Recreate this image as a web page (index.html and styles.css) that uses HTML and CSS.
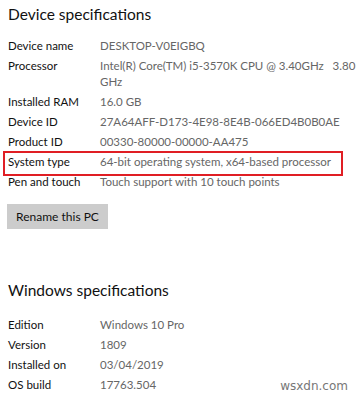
FILE: index.html
```html
<!DOCTYPE html>
<html lang="en">
<head>
    <meta charset="UTF-8">
    <meta name="viewport" content="width=device-width, initial-scale=1.0">
    <title>About</title>
    <link rel="stylesheet" href="styles.css">
</head>
<body>
    <h2 class="section-title">Device specifications</h2>
    <div class="specs">
        <div class="row"><span class="label">Device name</span><span class="value">DESKTOP-V0EIGBQ</span></div>
        <div class="row"><span class="label">Processor</span><span class="value">Intel(R) Core(TM) i5-3570K CPU @ 3.40GHz&nbsp;&nbsp;&nbsp;3.80<br>GHz</span></div>
        <div class="row"><span class="label">Installed RAM</span><span class="value">16.0 GB</span></div>
        <div class="row"><span class="label">Device ID</span><span class="value">27A64AFF-D173-4E98-8E4B-066ED4B0B0AE</span></div>
        <div class="row"><span class="label">Product ID</span><span class="value">00330-80000-00000-AA475</span></div>
        <div class="row highlight"><span class="label">System type</span><span class="value">64-bit operating system, x64-based processor</span></div>
        <div class="row"><span class="label">Pen and touch</span><span class="value">Touch support with 10 touch points</span></div>
    </div>
    <button class="rename">Rename this PC</button>

    <h2 class="section-title windows">Windows specifications</h2>
    <div class="specs windows-specs">
        <div class="row"><span class="label">Edition</span><span class="value">Windows 10 Pro</span></div>
        <div class="row"><span class="label">Version</span><span class="value">1809</span></div>
        <div class="row"><span class="label">Installed on</span><span class="value">03/04/2019</span></div>
        <div class="row"><span class="label">OS build</span><span class="value">17763.504</span></div>
    </div>

    <div class="watermark">wsxdn.com</div>
</body>
</html>
```
FILE: styles.css
```css
body {
    font-family: Lato, 'Open Sans', sans-serif;
    font-size: 11.5px;
    margin: 0;
    padding: 0 8px;
    background: white;
    color: #111;
    position: relative;
    height: 397px;
    overflow: hidden;
}
.section-title {
    font-size: 15.5px;
    font-weight: normal;
    margin: 0;
    padding-top: 1px;
    line-height: 26px;
}
.specs {
    margin-top: 9px;
}
.windows-specs {
    margin-top: 12px;
}
.row {
    display: grid;
    grid-template-columns: 92px 1fr;
    line-height: 16px;
    padding: 2px 0;
    white-space: nowrap;
}
.value {
    color: #666;
}
.highlight {
    position: relative;
}
.highlight::after {
    content: "";
    position: absolute;
    left: -5px;
    right: 9px;
    top: -1px;
    bottom: -4px;
    border: 2px solid #e01e24;
}
.rename {
    font-family: inherit;
    font-size: 12px;
    background: #ccc;
    color: #111;
    border: none;
    padding: 0;
    height: 25px;
    width: 101px;
    margin-top: 12px;
    margin-left: -1px;
    white-space: nowrap;
}
.windows {
    margin-top: 47px;
}
.watermark {
    position: absolute;
    right: 12px;
    bottom: 4px;
    color: #777;
    font-family: 'DejaVu Sans', sans-serif;
    font-size: 12px;
}
```
